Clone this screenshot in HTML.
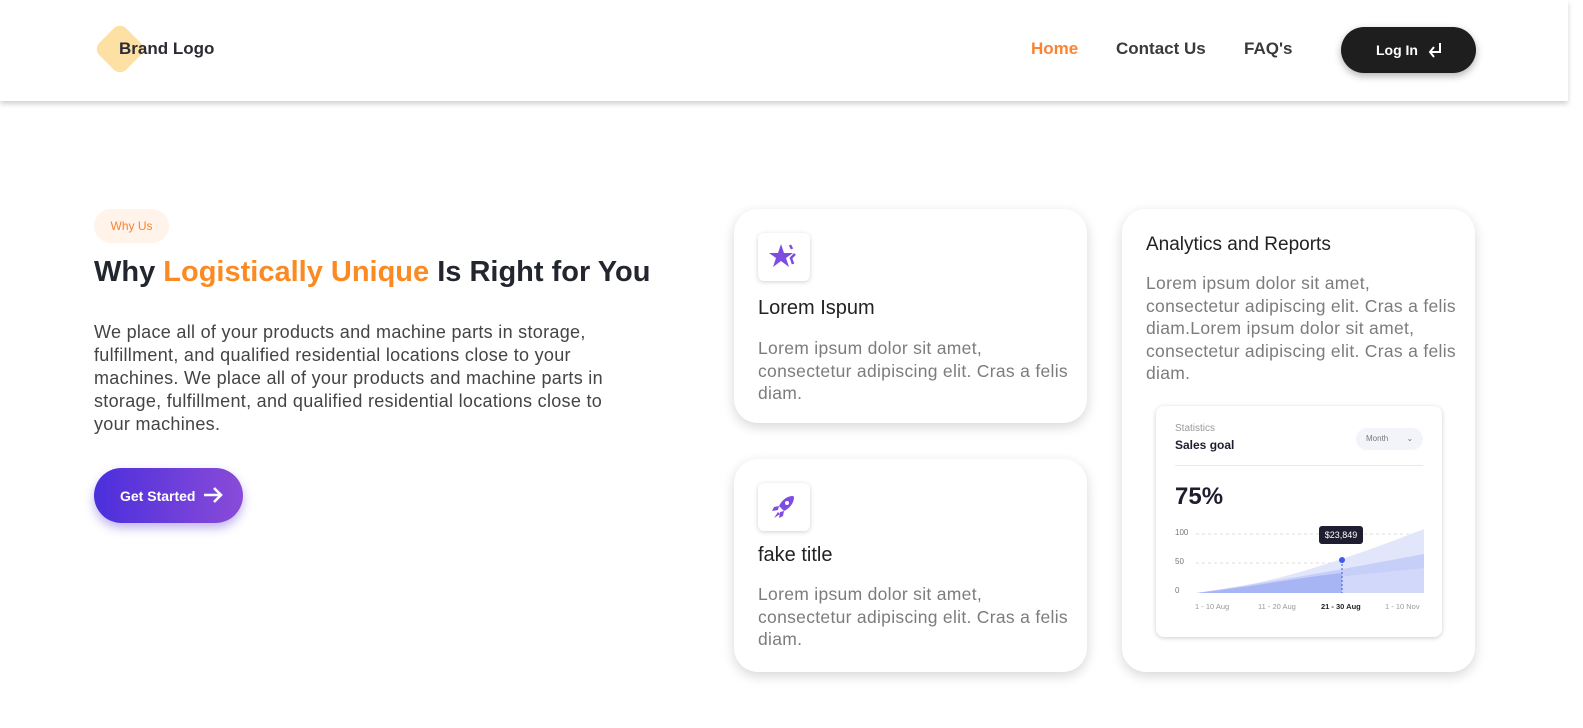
<!DOCTYPE html>
<html><head><meta charset="utf-8"><style>
*{margin:0;padding:0;box-sizing:border-box}
body{width:1583px;height:728px;background:#fff;font-family:"Liberation Sans",sans-serif;position:relative;overflow:hidden}
.hdr{position:absolute;left:0;top:0;width:1568px;height:101px;background:#fff;box-shadow:0 3px 5px rgba(0,0,0,.18)}
.abs{position:absolute}
.nav{font-weight:bold;font-size:17px;color:#3a3a3a;top:39px}
.card{position:absolute;background:#fff;border-radius:24px;box-shadow:0 4px 12px rgba(0,0,0,.16)}
.ic{position:absolute;left:24px;top:24px;width:52px;height:48px;border-radius:6px;background:#fff;box-shadow:0 1px 5px rgba(0,0,0,.18)}
.ct{position:absolute;left:24px;font-size:20px;color:#222}
.cp{position:absolute;left:24px;font-size:17.5px;line-height:22.5px;color:#7c7c7c;white-space:nowrap;letter-spacing:.3px}
</style></head><body>
<div class="hdr">
 <div class="abs" style="left:101px;top:30px;width:38px;height:38px;background:#fde0a4;border-radius:9px;transform:rotate(45deg)"></div>
 <div class="abs" style="left:119px;top:39px;font-weight:bold;font-size:17px;color:#2b2b35">Brand Logo</div>
 <div class="abs nav" style="left:1031px;color:#fb8332">Home</div>
 <div class="abs nav" style="left:1116px">Contact Us</div>
 <div class="abs nav" style="left:1244px">FAQ's</div>
 <div class="abs" style="left:1341px;top:27px;width:135px;height:46px;border-radius:23px;background:#1e1e1e;box-shadow:0 3px 8px rgba(0,0,0,.3);color:#fff;font-weight:bold;font-size:14px">
  <span class="abs" style="left:35px;top:15px">Log In</span>
  <svg class="abs" style="left:86px;top:14px" width="16" height="18" viewBox="0 0 16 18"><path d="M13 2v9H3M7 6l-4 5 4 5" fill="none" stroke="#fff" stroke-width="2"/></svg>
 </div>
</div>
<div class="abs" style="left:94px;top:209px;width:75px;height:34px;border-radius:17px;background:#fff3ea;color:#fb8332;font-size:12px;text-align:center;line-height:34px">Why Us</div>
<div class="abs" style="left:94px;top:256px;font-size:29px;font-weight:bold;color:#23252f;letter-spacing:0">Why <span style="color:#fb8a22">Logistically Unique</span> Is Right for You</div>
<div class="abs" style="left:94px;top:321px;font-size:18px;line-height:23px;color:#444;letter-spacing:.3px;white-space:nowrap">We place all of your products and machine parts in storage,<br>fulfillment, and qualified residential locations close to your<br>machines. We place all of your products and machine parts in<br>storage, fulfillment, and qualified residential locations close to<br>your machines.</div>
<div class="abs" style="left:94px;top:468px;width:149px;height:55px;border-radius:28px;background:linear-gradient(90deg,#4b2fdc,#8a4bd8);box-shadow:0 5px 10px rgba(80,40,200,.35);color:#fff;font-weight:bold;font-size:14px">
 <span class="abs" style="left:26px;top:20px">Get Started</span>
 <svg class="abs" style="left:108px;top:18px" width="22" height="18" viewBox="0 0 22 18"><path d="M2 9h17M12 2l7 7-7 7" fill="none" stroke="#fff" stroke-width="2.6"/></svg>
</div>

<div class="card" style="left:734px;top:209px;width:353px;height:214px">
 <div class="ic"><svg class="abs" style="left:10px;top:8px" width="32" height="32" viewBox="0 0 32 32"><path d="M13 3l3 9h9l-7 5 3 9-8-6-8 6 3-9-7-5h9z" fill="#7c4de0"/><path d="M22 4l2 4M27 13l-4 4 2 6" stroke="#7c4de0" stroke-width="2.5" fill="none"/></svg></div>
 <div class="ct" style="top:88px">Lorem Ispum</div>
 <div class="cp" style="top:128px">Lorem ipsum dolor sit amet,<br>consectetur adipiscing elit. Cras a felis<br>diam.</div>
</div>
<div class="card" style="left:734px;top:459px;width:353px;height:213px">
 <div class="ic"><svg class="abs" style="left:11px;top:9px" width="30" height="30" viewBox="0 0 30 30"><path d="M24 4c-6 0-11 4-14 10l5 5c6-3 10-8 10-14z" fill="#7c4de0"/><circle cx="18" cy="11" r="2" fill="#fff"/><path d="M10 14l-5 1-2 4 6-1zM15 19l-1 5-4 2 1-6zM9 20l-4 6 6-4z" fill="#7c4de0"/></svg></div>
 <div class="ct" style="top:85px">fake title</div>
 <div class="cp" style="top:124px">Lorem ipsum dolor sit amet,<br>consectetur adipiscing elit. Cras a felis<br>diam.</div>
</div>
<div class="card" style="left:1122px;top:209px;width:353px;height:463px">
 <div class="ct" style="top:25px;font-size:19px">Analytics and Reports</div>
 <div class="cp" style="top:63px">Lorem ipsum dolor sit amet,<br>consectetur adipiscing elit. Cras a felis<br>diam.Lorem ipsum dolor sit amet,<br>consectetur adipiscing elit. Cras a felis<br>diam.</div>
 <div class="abs" style="left:34px;top:197px;width:286px;height:231px;border-radius:8px;background:#fff;box-shadow:0 1px 5px rgba(0,0,0,.2)">
  <div class="abs" style="left:19px;top:17px;font-size:10px;color:#999">Statistics</div>
  <div class="abs" style="left:19px;top:32px;font-size:12px;font-weight:bold;color:#1e1e2e">Sales goal</div>
  <div class="abs" style="left:200px;top:22px;width:67px;height:22px;border-radius:11px;background:#f3f4fa;font-size:8px;color:#777;line-height:22px;padding-left:10px">Month <span style="margin-left:16px">⌄</span></div>
  <div class="abs" style="left:19px;top:59px;width:248px;height:1px;background:#e8e8ee"></div>
  <div class="abs" style="left:19px;top:77px;font-size:24px;font-weight:bold;color:#1e1e2e">75%</div>
  <div class="abs" style="left:19px;top:122px;font-size:8px;color:#777">100</div>
  <div class="abs" style="left:19px;top:151px;font-size:8px;color:#777">50</div>
  <div class="abs" style="left:19px;top:180px;font-size:8px;color:#777">0</div>
  <svg class="abs" style="left:40px;top:120px" width="228" height="70" viewBox="0 0 228 70">
   <path d="M0 8H228M0 37H228" stroke="#ddd" stroke-dasharray="3 3"/>
   <path d="M0 67C60 60 120 45 228 3V67z" fill="#e2e6fb"/>
   <path d="M0 67C60 58 110 50 228 28V67z" fill="#c6cff8"/>
   <path d="M0 67C50 62 100 55 228 42V67z" fill="#d8ddfa" opacity=".6"/>
   <path d="M0 67C50 62 100 52 146 47V67z" fill="#a7b5f5"/>
   <path d="M146 34V67" stroke="#3b5bf0" stroke-dasharray="2 2"/>
   <circle cx="146" cy="34" r="3" fill="#3b5bf0"/>
  </svg>
  <div class="abs" style="left:163px;top:120px;width:44px;height:18px;border-radius:3px;background:#1e1e30;color:#fff;font-size:9px;text-align:center;line-height:18px">$23,849</div>
  <div class="abs" style="left:39px;top:196px;font-size:7.5px;color:#999">1 - 10 Aug</div>
  <div class="abs" style="left:102px;top:196px;font-size:7.5px;color:#999">11 - 20 Aug</div>
  <div class="abs" style="left:165px;top:196px;font-size:7.5px;color:#222;font-weight:bold">21 - 30 Aug</div>
  <div class="abs" style="left:229px;top:196px;font-size:7.5px;color:#999">1 - 10 Nov</div>
 </div>
</div>
</body></html>
